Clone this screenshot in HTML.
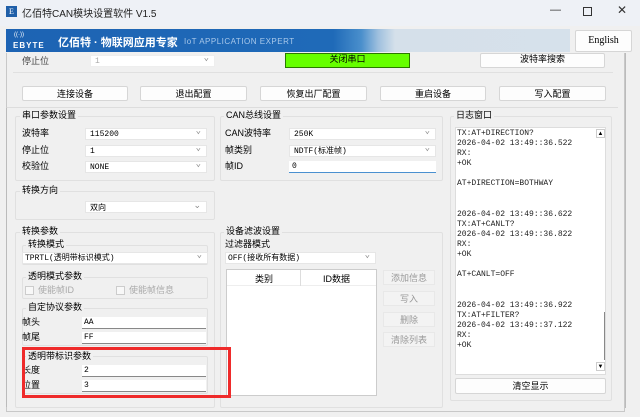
<!DOCTYPE html>
<html><head><meta charset="utf-8"><style>
*{box-sizing:border-box;margin:0;padding:0}
body{width:640px;height:417px;background:#f0f0f0;position:relative;overflow:hidden;font-family:"Liberation Sans","Noto Sans CJK SC",sans-serif;font-size:9px;color:#000}
.a{position:absolute}
.btn{position:absolute;background:#fdfdfd;border:1px solid #d6d6d6;border-radius:2px;text-align:center;font-size:9px;line-height:14px}
.grp{position:absolute;border:1px solid #e0e0e0;border-radius:2px}
.gt{position:absolute;background:#f0f0f0;font-size:9px;padding:0 2px;line-height:11px}
.lb{position:absolute;font-size:9px;line-height:11px}
.cb{position:absolute;background:#fff;border:1px solid #e6e6e6;height:12px;font-family:"Liberation Mono","Noto Sans CJK SC",monospace;font-size:8px;line-height:11px;padding-left:4px}
.cb::after{content:"⌄";position:absolute;right:5px;top:-3px;color:#888;font-size:9px}
.tb{position:absolute;background:#fff;border-bottom:1px solid #888;height:12px;font-family:"Liberation Mono","Noto Sans CJK SC",monospace;font-size:8px;line-height:12px;padding-left:2px}
.dis{position:absolute;background:#f3f3f3;border:1px solid #e8e8e8;color:#999;text-align:center;font-size:9px;line-height:14px}
.log{font-family:"Liberation Mono","Noto Sans CJK SC",monospace;font-size:8px;line-height:10.1px;white-space:pre;color:#222}
</style></head><body>
<div class="a" style="left:0;top:0;width:640px;height:26px;background:#eef1f6"></div>
<div class="a" style="left:6px;top:6px;width:11px;height:11px;background:#1f5fa8;color:#fff;font-size:8px;line-height:11px;text-align:center;font-family:'Liberation Serif'">E</div>
<div class="a" style="left:22px;top:5px;font-size:10px;color:#222">亿佰特CAN模块设置软件 V1.5</div>
<div class="a" style="left:550px;top:4px;font-size:11px;color:#333">—</div>
<div class="a" style="left:583px;top:7px;width:9px;height:9px;border:1px solid #333"></div>
<div class="a" style="left:617px;top:3px;font-size:12px;color:#333">✕</div>
<div class="a" style="left:6px;top:29px;width:564px;height:23px;background:linear-gradient(90deg,#1d63b3 0%,#1f6ab8 58%,#4a8fcc 63%,#9fc0de 66%,#d5e0ea 69%,#d6e1eb 100%)"></div>
<div class="a" style="left:14px;top:32px;color:#fff;font-size:6px">((·))</div>
<div class="a" style="left:13px;top:41px;color:#fff;font-size:8px;font-weight:bold;letter-spacing:1px">EBYTE</div>
<div class="a" style="left:58px;top:34px;color:#fff;font-size:11px;font-weight:bold">亿佰特 · 物联网应用专家</div>
<div class="a" style="left:184px;top:37px;color:#a8c8ea;font-size:8px;letter-spacing:.5px">IoT APPLICATION EXPERT</div>
<div class="btn" style="left:575px;top:30px;width:57px;height:22px;line-height:20px;font-family:'Liberation Serif';font-size:10px">English</div>
<div class="a" style="left:6px;top:53px;width:619px;height:359px;border:1px solid #c8c8c8;border-top:none;background:#f0f0f0"></div>
<div class="a" style="left:625px;top:53px;width:1px;height:355px;background:#bbb"></div>
<div class="lb" style="left:22px;top:56px;color:#444">停止位</div>
<div class="cb" style="left:90px;top:55px;width:125px;color:#aaa;border-color:#eee">1</div>
<div class="a" style="left:285px;top:53px;width:125px;height:15px;background:#66ff00;border:1px solid #2a7a00;text-align:center;font-size:9px;line-height:11px">关闭串口</div>
<div class="btn" style="left:480px;top:53px;width:125px;height:15px;line-height:11px">波特率搜索</div>
<div class="a" style="left:13px;top:72px;width:600px;height:1px;background:#e0e0e0"></div>
<div class="btn" style="left:22px;top:86px;width:106px;height:15px">连接设备</div>
<div class="btn" style="left:140px;top:86px;width:107px;height:15px">退出配置</div>
<div class="btn" style="left:260px;top:86px;width:107px;height:15px">恢复出厂配置</div>
<div class="btn" style="left:380px;top:86px;width:106px;height:15px">重启设备</div>
<div class="btn" style="left:499px;top:86px;width:107px;height:15px">写入配置</div>
<div class="a" style="left:6px;top:107px;width:612px;height:300px;border-top:1px solid #ddd;border-left:1px solid #bbb"></div>

<div class="grp" style="left:15px;top:116px;width:200px;height:65px"></div>
<div class="gt" style="left:20px;top:110px">串口参数设置</div>
<div class="lb" style="left:22px;top:128px">波特率</div><div class="cb" style="left:85px;top:128px;width:122px">115200</div>
<div class="lb" style="left:22px;top:145px">停止位</div><div class="cb" style="left:85px;top:145px;width:122px">1</div>
<div class="lb" style="left:22px;top:161px">校验位</div><div class="cb" style="left:85px;top:161px;width:122px">NONE</div>

<div class="grp" style="left:220px;top:116px;width:223px;height:65px"></div>
<div class="gt" style="left:224px;top:110px">CAN总线设置</div>
<div class="lb" style="left:225px;top:128px">CAN波特率</div><div class="cb" style="left:289px;top:128px;width:147px">250K</div>
<div class="lb" style="left:225px;top:145px">帧类别</div><div class="cb" style="left:289px;top:145px;width:147px">NDTF(标准帧)</div>
<div class="lb" style="left:225px;top:161px">帧ID</div><div class="tb" style="left:289px;top:161px;width:147px;border-bottom:1px solid #4a90d0;padding-left:3px">0</div>

<div class="grp" style="left:15px;top:191px;width:200px;height:29px"></div>
<div class="gt" style="left:20px;top:185px">转换方向</div>
<div class="cb" style="left:85px;top:201px;width:122px;font-family:'Noto Sans CJK SC';font-size:8px">双向</div>

<div class="grp" style="left:15px;top:232px;width:200px;height:176px"></div>
<div class="gt" style="left:20px;top:226px">转换参数</div>
<div class="grp" style="left:22px;top:245px;width:186px;height:20px"></div>
<div class="gt" style="left:26px;top:239px">转换模式</div>
<div class="cb" style="left:22px;top:252px;width:186px;padding-left:2px">TPRTL(透明带标识模式)</div>
<div class="grp" style="left:22px;top:277px;width:186px;height:22px"></div>
<div class="gt" style="left:26px;top:271px">透明模式参数</div>
<div class="a" style="left:25px;top:286px;width:9px;height:9px;border:1px solid #ccc;background:#f8f8f8"></div>
<div class="lb" style="left:38px;top:285px;color:#aaa">使能帧ID</div>
<div class="a" style="left:116px;top:286px;width:9px;height:9px;border:1px solid #ccc;background:#f8f8f8"></div>
<div class="lb" style="left:129px;top:285px;color:#aaa">使能帧信息</div>
<div class="grp" style="left:22px;top:308px;width:186px;height:38px"></div>
<div class="gt" style="left:26px;top:302px">自定协议参数</div>
<div class="lb" style="left:22px;top:317px">帧头</div><div class="tb" style="left:82px;top:317px;width:124px">AA</div>
<div class="lb" style="left:22px;top:332px">帧尾</div><div class="tb" style="left:82px;top:332px;width:124px">FF</div>
<div class="grp" style="left:22px;top:356px;width:186px;height:38px"></div>
<div class="gt" style="left:26px;top:351px">透明带标识参数</div>
<div class="lb" style="left:22px;top:365px">长度</div><div class="tb" style="left:82px;top:365px;width:124px">2</div>
<div class="lb" style="left:22px;top:380px">位置</div><div class="tb" style="left:82px;top:380px;width:124px">3</div>

<div class="grp" style="left:220px;top:232px;width:223px;height:176px"></div>
<div class="gt" style="left:224px;top:226px">设备滤波设置</div>
<div class="lb" style="left:225px;top:239px">过滤器模式</div>
<div class="cb" style="left:225px;top:252px;width:151px;padding-left:2px">OFF(接收所有数据)</div>
<div class="a" style="left:226px;top:269px;width:151px;height:127px;background:#fff;border:1px solid #ccc"></div>
<div class="a" style="left:227px;top:270px;width:149px;height:16px;border-bottom:1px solid #eee"></div>
<div class="a" style="left:300px;top:270px;width:1px;height:16px;background:#ddd"></div>
<div class="lb" style="left:255px;top:274px">类别</div>
<div class="lb" style="left:323px;top:274px">ID数据</div>
<div class="dis" style="left:383px;top:270px;width:52px;height:15px">添加信息</div>
<div class="dis" style="left:383px;top:291px;width:52px;height:15px">写入</div>
<div class="dis" style="left:383px;top:312px;width:52px;height:15px">删除</div>
<div class="dis" style="left:383px;top:332px;width:52px;height:15px">清除列表</div>

<div class="a" style="left:22px;top:347px;width:209px;height:51px;border:3px solid #ef2b2b;z-index:5"></div>

<div class="grp" style="left:450px;top:116px;width:162px;height:285px"></div>
<div class="gt" style="left:454px;top:110px">日志窗口</div>
<div class="a" style="left:455px;top:127px;width:151px;height:248px;background:#fff;border:1px solid #ddd"></div>
<div class="a log" style="left:457px;top:129px">TX:AT+DIRECTION?
2026-04-02 13:49::36.522
RX:
+OK

AT+DIRECTION=BOTHWAY


2026-04-02 13:49::36.622
TX:AT+CANLT?
2026-04-02 13:49::36.822
RX:
+OK

AT+CANLT=OFF


2026-04-02 13:49::36.922
TX:AT+FILTER?
2026-04-02 13:49::37.122
RX:
+OK</div>
<div class="a" style="left:596px;top:129px;width:9px;height:9px;border:1px solid #ccc;font-size:6px;text-align:center;line-height:8px">▲</div>
<div class="a" style="left:604px;top:312px;width:1px;height:48px;background:#888"></div>
<div class="a" style="left:596px;top:362px;width:9px;height:9px;border:1px solid #ccc;font-size:6px;text-align:center;line-height:8px">▼</div>
<div class="btn" style="left:455px;top:378px;width:151px;height:16px">清空显示</div>
</body></html>
